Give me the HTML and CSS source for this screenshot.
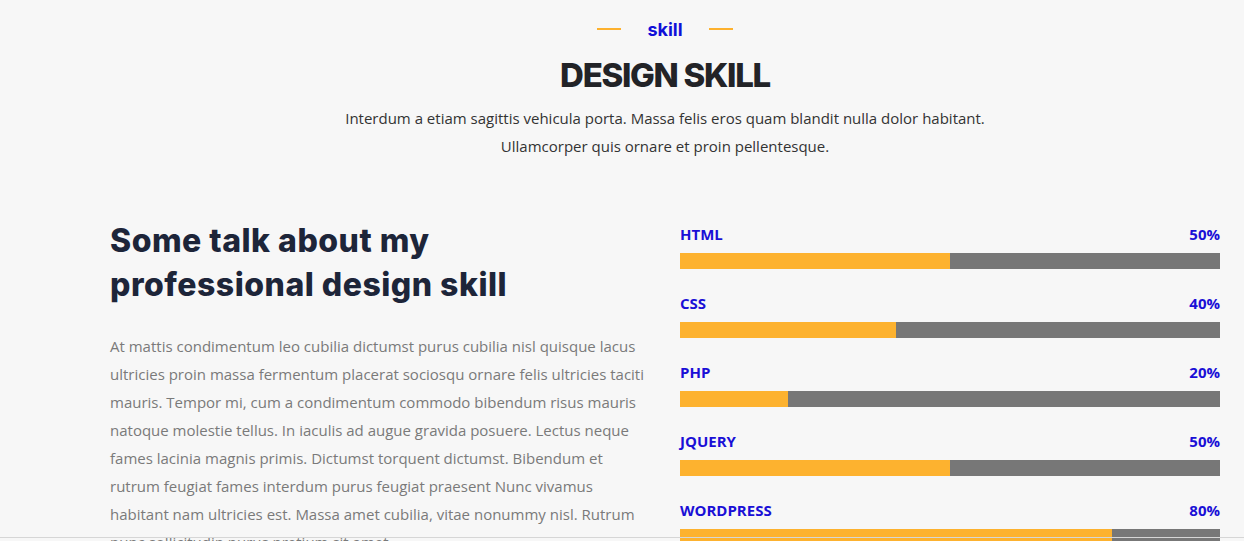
FILE: index.html
```html
<!DOCTYPE html>
<html lang="en">
<head>
<meta charset="utf-8">
<title>Design Skill</title>
<link rel="stylesheet" href="styles.css">
</head>
<body>
<section class="skills">
  <header class="section-head">
    <div class="eyebrow"><span class="dash"></span><span class="eyebrow-text">skill</span><span class="dash"></span></div>
    <h2 class="title">DESIGN SKILL</h2>
    <p class="lead">Interdum a etiam sagittis vehicula porta. Massa felis eros quam blandit nulla dolor habitant.<br>Ullamcorper quis ornare et proin pellentesque.</p>
  </header>
  <div class="row">
    <div class="about">
      <h3 class="about-title">Some talk about my<br>professional design skill</h3>
      <p class="about-text">At mattis condimentum leo cubilia dictumst purus cubilia nisl quisque lacus ultricies proin massa fermentum placerat sociosqu ornare felis ultricies taciti mauris. Tempor mi, cum a condimentum commodo bibendum risus mauris natoque molestie tellus. In iaculis ad augue gravida posuere. Lectus neque fames lacinia magnis primis. Dictumst torquent dictumst. Bibendum et rutrum feugiat fames interdum purus feugiat praesent Nunc vivamus habitant nam ultricies est. Massa amet cubilia, vitae nonummy nisl. Rutrum nunc sollicitudin purus pretium sit amet.</p>
    </div>
    <div class="bars">
      <div class="skill">
        <div class="skill-head"><span>HTML</span><span>50%</span></div>
        <div class="track"><div class="fill" style="width:50%"></div></div>
      </div>
      <div class="skill">
        <div class="skill-head"><span>CSS</span><span>40%</span></div>
        <div class="track"><div class="fill" style="width:40%"></div></div>
      </div>
      <div class="skill">
        <div class="skill-head"><span>PHP</span><span>20%</span></div>
        <div class="track"><div class="fill" style="width:20%"></div></div>
      </div>
      <div class="skill">
        <div class="skill-head"><span>JQUERY</span><span>50%</span></div>
        <div class="track"><div class="fill" style="width:50%"></div></div>
      </div>
      <div class="skill">
        <div class="skill-head"><span>WORDPRESS</span><span>80%</span></div>
        <div class="track"><div class="fill" style="width:80%"></div></div>
      </div>
    </div>
  </div>
</section>
<div class="edge-line"></div>
</body>
</html>
```
FILE: styles.css
```css
html, body {
  margin: 0;
  padding: 0;
  background: #f7f7f7;
  overflow: hidden;
}
body {
  font-family: "Open Sans", "Noto Sans", sans-serif;
  color: #333;
}
.skills {
  width: 1110px;
  margin-left: 110px;
  padding-top: 16px;
}
.section-head {
  text-align: center;
}
.eyebrow {
  display: flex;
  justify-content: center;
  align-items: center;
  gap: 26px;
  height: 26px;
}
.dash {
  width: 24px;
  height: 2px;
  background: #fdb12e;
}
.eyebrow-text {
  font-family: Inter, "Noto Sans", sans-serif;
  font-weight: 700;
  font-size: 18px;
  color: #1010d8;
}
.title {
  margin: 11px 0 0;
  font-family: Inter, "Noto Sans", sans-serif;
  font-weight: 800;
  font-size: 33px;
  line-height: 44px;
  letter-spacing: -1.3px;
  color: #222327;
}
.lead {
  margin: 7px 0 0;
  font-size: 15px;
  line-height: 28px;
  color: #333;
}
.row {
  display: grid;
  grid-template-columns: 540px 540px;
  column-gap: 30px;
  margin-top: 59px;
}
.about-title {
  margin: 0;
  font-family: Inter, "Noto Sans", sans-serif;
  font-weight: 800;
  font-size: 32px;
  line-height: 44px;
  letter-spacing: 0.5px;
  color: #1d2539;
}
.about-text {
  margin: 25px 0 0;
  font-size: 15px;
  line-height: 28px;
  color: #7a7a7a;
}
.bars {
  display: flex;
  flex-direction: column;
  gap: 23px;
  padding-top: 4px;
}
.skill-head {
  display: flex;
  justify-content: space-between;
  font-weight: 700;
  font-size: 15px;
  line-height: 22px;
  color: #1a0fd6;
}
.track {
  margin-top: 8px;
  height: 16px;
  background: #777777;
}
.fill {
  height: 100%;
  background: #fdb22f;
}
.edge-line {
  position: fixed;
  left: 0;
  right: 0;
  top: 537px;
  height: 1px;
  background: #d6d6d6;
}
```
